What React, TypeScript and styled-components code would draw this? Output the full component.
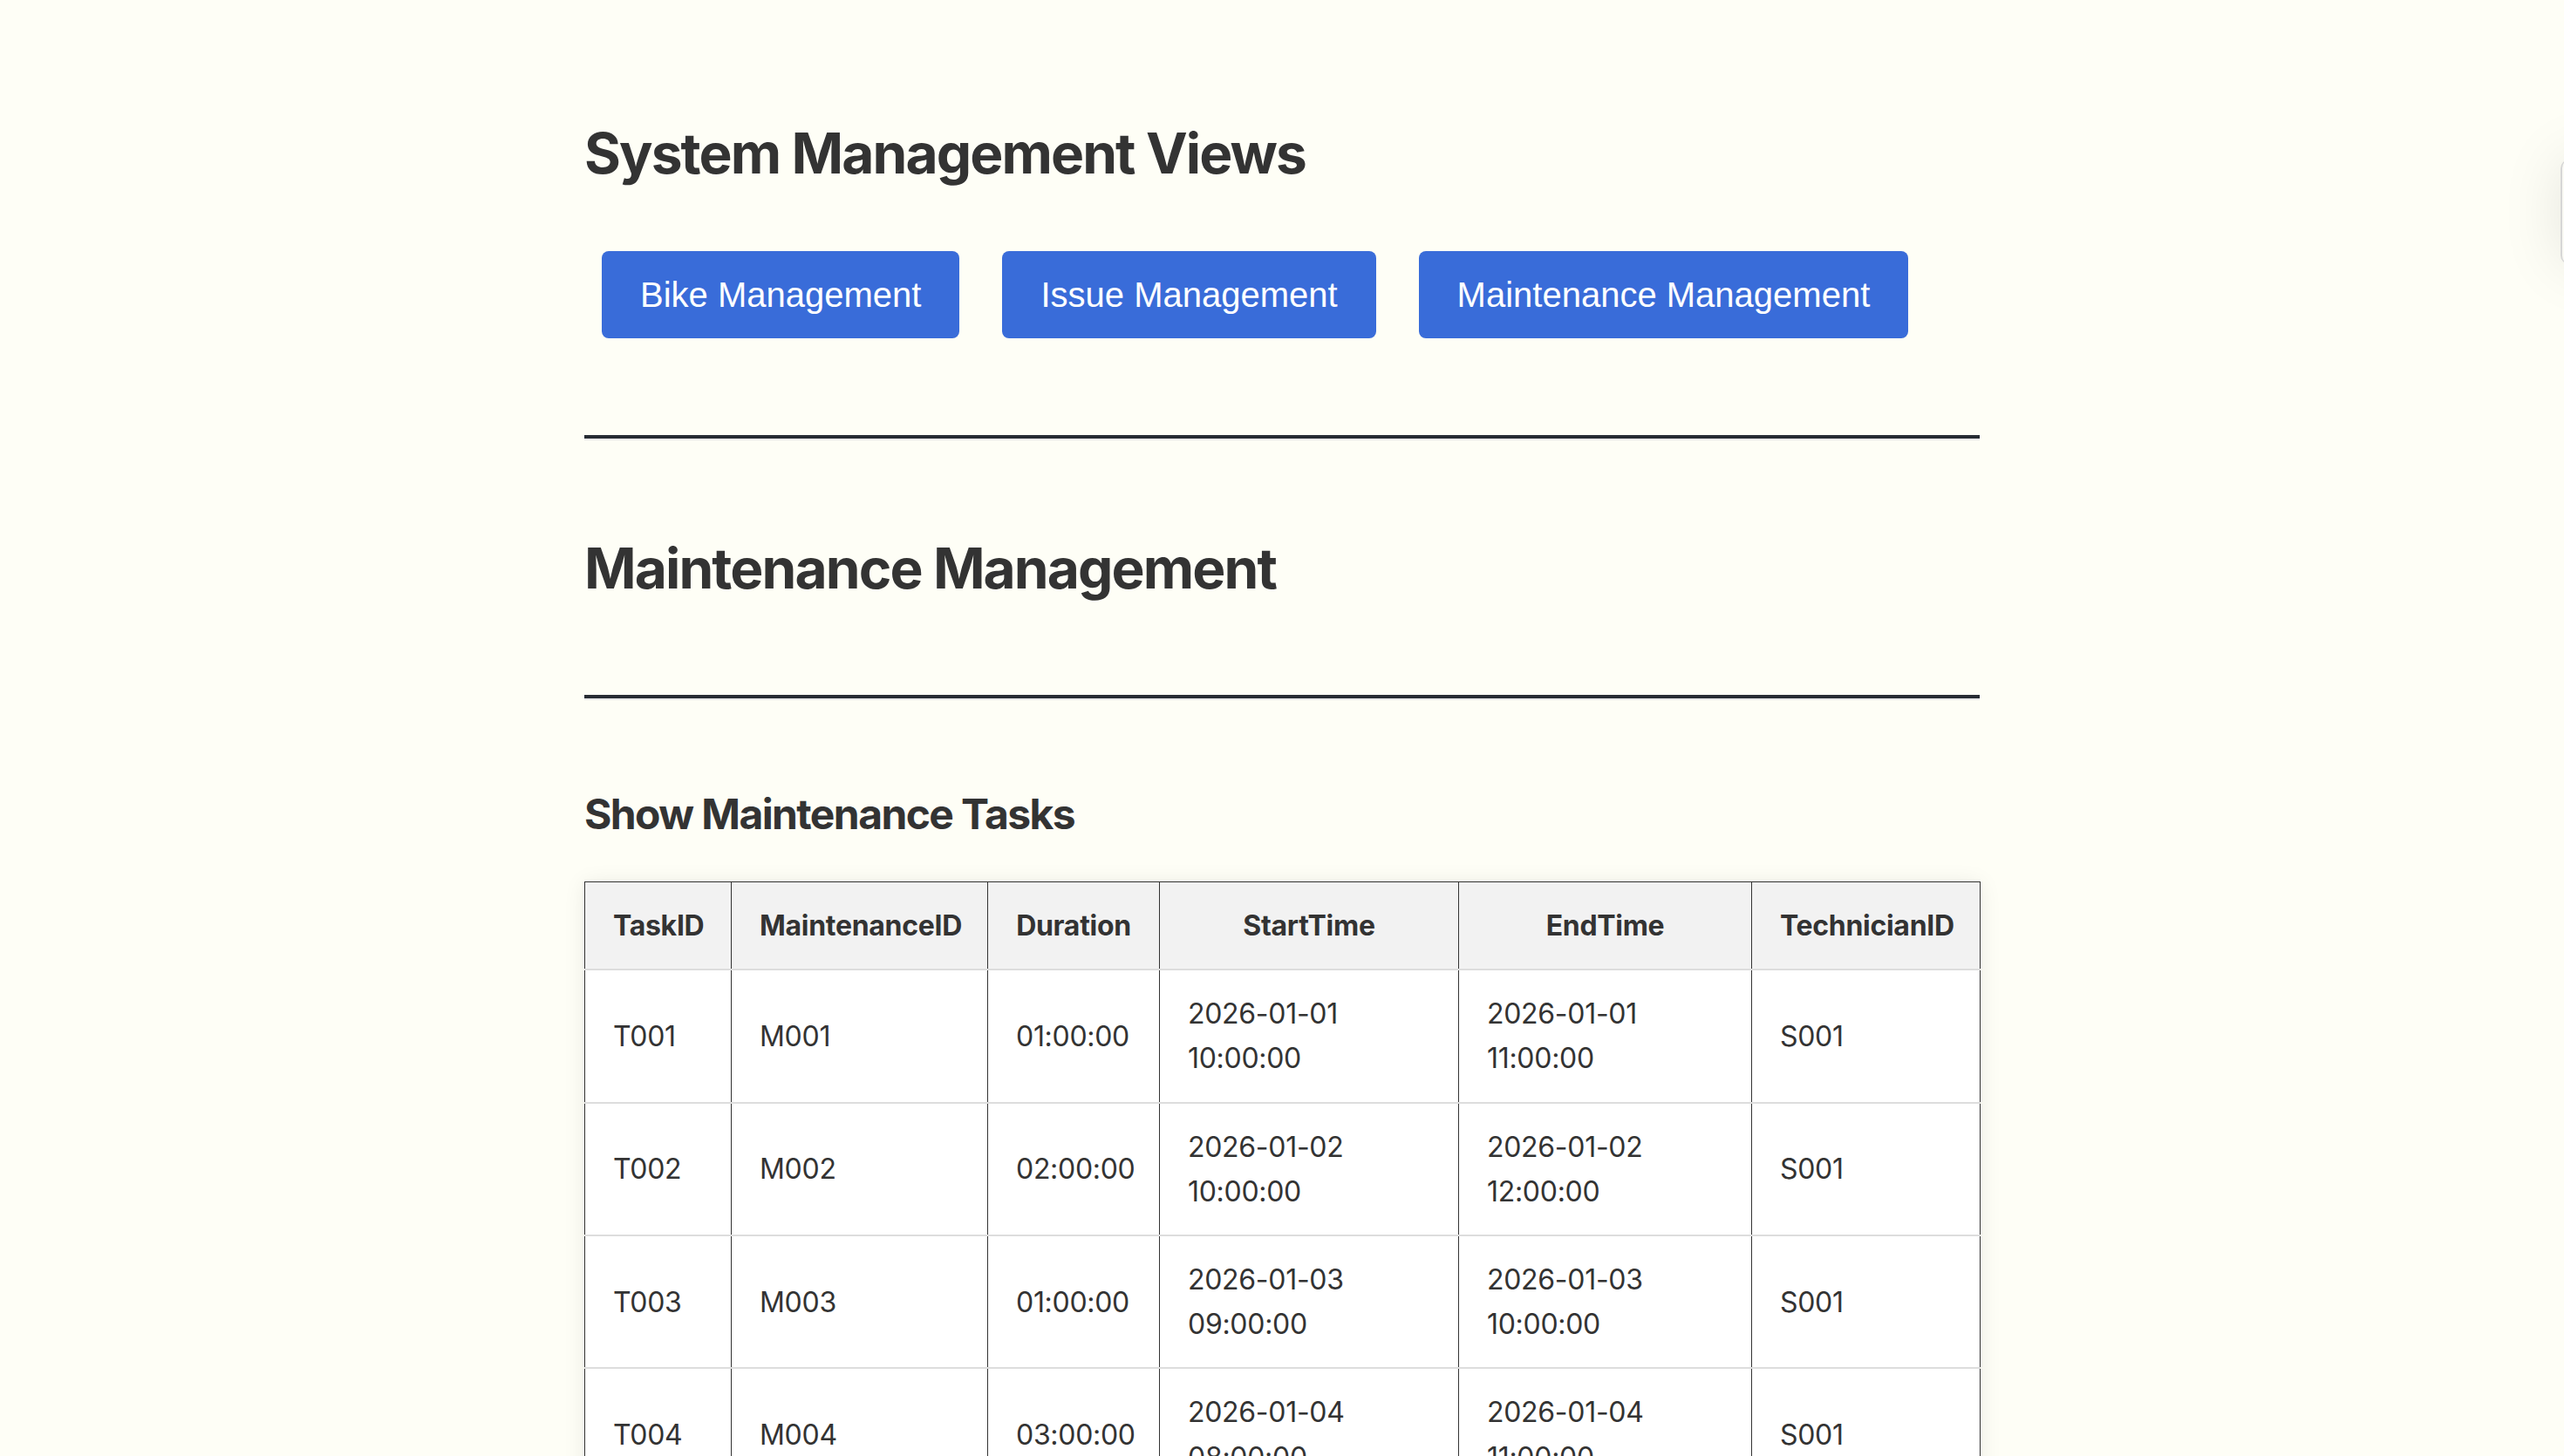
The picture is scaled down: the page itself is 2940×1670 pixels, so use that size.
import styled, { createGlobalStyle } from "styled-components";

const GlobalStyle = createGlobalStyle`
  html {
    scrollbar-width: none;
    overflow-x: hidden;
  }
  html::-webkit-scrollbar {
    display: none;
  }
  body {
    margin: 0;
    background: #fefef6;
    color: #333;
    font-family: Inter, "Noto Sans", sans-serif;
  }
`;

const views = ["Bike Management", "Issue Management", "Maintenance Management"];

const columns = [
  { title: "TaskID", width: 168 },
  { title: "MaintenanceID", width: 294 },
  { title: "Duration", width: 197 },
  { title: "StartTime", width: 343 },
  { title: "EndTime", width: 336 },
  { title: "TechnicianID", width: 262 },
];

const tasks = [
  ["T001", "M001", "01:00:00", "2026-01-01 10:00:00", "2026-01-01 11:00:00", "S001"],
  ["T002", "M002", "02:00:00", "2026-01-02 10:00:00", "2026-01-02 12:00:00", "S001"],
  ["T003", "M003", "01:00:00", "2026-01-03 09:00:00", "2026-01-03 10:00:00", "S001"],
  ["T004", "M004", "03:00:00", "2026-01-04 08:00:00", "2026-01-04 11:00:00", "S001"],
];

const Page = styled.main`
  width: 1600px;
  margin: 0 auto;
  padding-top: 137px;
`;

const PageTitle = styled.h1<{ $top?: number }>`
  margin: ${({ $top }) => $top ?? 0}px 0 0;
  font-size: 64px;
  line-height: 78px;
  font-weight: 700;
  letter-spacing: -1.9px;
  color: #333;
`;

const SubTitle = styled.h3<{ $top: number }>`
  margin: ${({ $top }) => $top}px 0 0;
  font-size: 48px;
  line-height: 58px;
  font-weight: 700;
  letter-spacing: -1.6px;
  color: #333;
`;

const ViewBar = styled.nav`
  display: flex;
  gap: 49px;
  margin-top: 73px;
  padding-left: 20px;
`;

const ViewButton = styled.button`
  padding: 27px 44px;
  border: none;
  border-radius: 8px;
  background: #396cd9;
  color: #fff;
  font-family: "Liberation Sans", Arial, sans-serif;
  font-size: 40px;
  line-height: 46px;
  cursor: pointer;
`;

const Divider = styled.hr<{ $top: number }>`
  height: 0;
  margin: ${({ $top }) => $top}px 0 0;
  border: 0;
  border-top: 4px solid #272c33;
  border-bottom: 2px solid #e8e8e8;
`;

const TaskTable = styled.table`
  width: 100%;
  margin-top: 48px;
  border-collapse: collapse;
  table-layout: fixed;
  background: #fff;
  box-shadow: 0 2px 24px rgba(0, 0, 0, 0.08);
  font-size: 32px;
  line-height: 1.6;
  letter-spacing: -0.3px;
`;

const Col = styled.col<{ $w: number }>`
  width: ${({ $w }) => $w}px;
`;

const HeadCell = styled.th`
  padding: 24px 32px;
  background: #f2f2f2;
  border: 1px solid #333;
  border-bottom: 2px solid #ddd;
  font-weight: 700;
  text-align: center;
  white-space: nowrap;
`;

const Cell = styled.td`
  padding: 24px 32px;
  border-left: 1px solid #333;
  border-right: 1px solid #333;
  border-bottom: 2px solid #ddd;
  vertical-align: middle;
  text-align: left;
`;

const EdgeTab = styled.div`
  position: fixed;
  top: 183px;
  right: -198px;
  width: 200px;
  height: 120px;
  border-left: 2px solid #d6d6d6;
  border-radius: 10px;
  background: #fafaf4;
  box-shadow: 0 0 70px rgba(0, 0, 0, 0.1);
`;

export default function App() {
  return (
    <>
      <GlobalStyle />
      <Page>
        <PageTitle>System Management Views</PageTitle>
        <ViewBar>
          {views.map((view) => (
            <ViewButton key={view}>{view}</ViewButton>
          ))}
        </ViewBar>
        <Divider $top={111} />
        <PageTitle $top={108}>Maintenance Management</PageTitle>
        <Divider $top={106} />
        <SubTitle $top={102}>Show Maintenance Tasks</SubTitle>
        <TaskTable>
          <colgroup>
            {columns.map((col) => (
              <Col key={col.title} $w={col.width} />
            ))}
          </colgroup>
          <thead>
            <tr>
              {columns.map((col) => (
                <HeadCell key={col.title}>{col.title}</HeadCell>
              ))}
            </tr>
          </thead>
          <tbody>
            {tasks.map((task) => (
              <tr key={task[0]}>
                {task.map((value, i) => (
                  <Cell key={i}>{value}</Cell>
                ))}
              </tr>
            ))}
          </tbody>
        </TaskTable>
      </Page>
      <EdgeTab />
    </>
  );
}
